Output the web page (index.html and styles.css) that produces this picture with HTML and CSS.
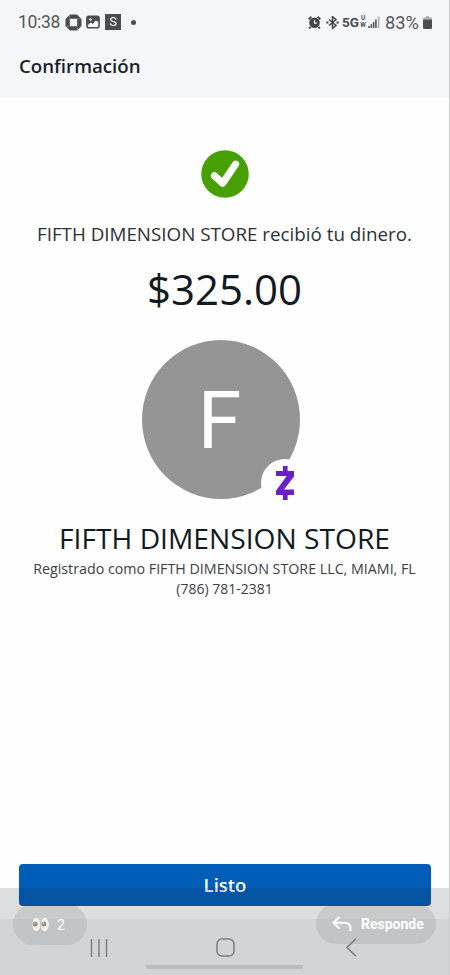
FILE: index.html
```html
<!DOCTYPE html>
<html lang="es">
<head>
<meta charset="utf-8">
<meta name="viewport" content="width=device-width, initial-scale=1">
<title>Confirmación</title>
<link rel="stylesheet" href="styles.css">
</head>
<body>
<div class="screen">
  <header class="top">
    <div class="status">
      <div class="status-left">
        <span class="clock">10:38</span>
        <svg class="ic-chase" width="17" height="17" viewBox="0 0 17 17"><path fill="#4b4c4e" fill-rule="evenodd" d="M5 .5h7L16.500 5v7L12 16.500H5L.5 12V5zM4.800 4.800v7.400h7.400V4.800z"/><path d="M4.700.5v4M16.500 4.700h-4M12.300 16.500v-4M.5 12.300h4" stroke="#a5a6a8" stroke-width=".5"/></svg>
        <svg class="ic-photo" width="14" height="14" viewBox="0 0 14 14"><rect x=".9" y="1.400" width="12.200" height="11.400" rx="2" fill="none" stroke="#4b4c4e" stroke-width="1.600"/><path d="M1 2.500Q1 1 3 1h8q2 0 2 1.500V7L9.500 5.500 7 9 4.500 7.500 2 10H1z" fill="#4b4c4e"/><path d="M2.500 11l2.300-3 2 1.500L9.600 6l2.200 3v2z" fill="#f4f6f9"/><circle cx="4.500" cy="4.500" r="1.200" fill="#f4f6f9"/></svg>
        <span class="app-s">S</span>
        <span class="dot"></span>
      </div>
      <div class="status-right">
        <svg class="ic-alarm" width="13" height="13" viewBox="0 0 13 13"><circle cx="6.500" cy="6.800" r="5.300" fill="#444547"/><path d="M.6 3.400L3.400.7M12.400 3.400L9.600.7M2.600 11L1.200 12.500M10.400 11l1.400 1.500" stroke="#444547" stroke-width="1.900"/><path d="M6.500 4v3.200h2.600" fill="none" stroke="#f4f6f9" stroke-width="1.200"/></svg>
        <svg class="ic-bt" width="13" height="13" viewBox="0 0 13 13"><path d="M3 3.500l7 6L6.500 12.300V.7L10 3.500l-7 6" fill="none" stroke="#444547" stroke-width="1.500"/><path d="M.3 6.500h2.200M10.500 6.500h2.200" stroke="#444547" stroke-width="1.900"/></svg>
        <span class="net">5G</span>
        <span class="uw"><span>U</span><span>W</span></span>
        <svg class="ic-signal" width="12" height="12" viewBox="0 0 12 12"><path d="M1 12V10M3.300 12V8.300M5.600 12V6M7.900 12V3.500" stroke="#58595b" stroke-width="1.600"/><path d="M10.600 12V.5" stroke="#aaabad" stroke-width="1.600"/></svg>
        <span class="pct">83%</span>
        <svg class="ic-batt" width="9" height="13" viewBox="0 0 9 13"><path d="M0 3.500V2.500Q0 1.500 1 1.500h2V.3h3v1.200h2q1 0 1 1v1z" fill="#aaabad"/><path d="M0 3.500h9V12q0 1-1 1H1q-1 0-1-1z" fill="#4e4f51"/></svg>
      </div>
    </div>
    <h1 class="title">Confirmación</h1>
  </header>

  <main class="content">
    <svg class="check" width="48" height="48" viewBox="0 0 48 48"><circle cx="24" cy="24" r="23.800" fill="#46a000"/><path d="M13.500 25.900l8.200 7.300L34.600 14.300" fill="none" stroke="#fff" stroke-width="7.200" stroke-linecap="round" stroke-linejoin="round"/></svg>
    <p class="message">FIFTH DIMENSION STORE recibió tu dinero.</p>
    <p class="amount">$325.00</p>
    <div class="avatar">
      <span class="initial">F</span>
      <span class="badge">
        <svg width="20" height="34" viewBox="0 0 20 34"><path d="M1 5h6.900V0h4.700V5H19v5.500L9 23.500h10V29h-6.400v5H7.900v-5H1v-4.300L11.700 10H1z" fill="#6a1fc9"/></svg>
      </span>
    </div>
    <h2 class="store">FIFTH DIMENSION STORE</h2>
    <p class="registered">Registrado como FIFTH DIMENSION STORE LLC, MIAMI, FL</p>
    <p class="phone">(786) 781-2381</p>
  </main>

  <button class="done">Listo</button>

  <div class="shade"></div>
  <div class="pill pill-views">
    <svg width="17" height="15" viewBox="0 0 17 15"><ellipse cx="4.200" cy="7.500" rx="4" ry="6.800" fill="#f5f0ec"/><ellipse cx="12.800" cy="7.500" rx="4" ry="6.800" fill="#f5f0ec"/><circle cx="3.200" cy="7" r="2.500" fill="#9a8f88"/><circle cx="11.800" cy="7" r="2.500" fill="#9a8f88"/><circle cx="2.700" cy="6" r=".8" fill="#ddd"/><circle cx="11.300" cy="6" r=".8" fill="#ddd"/></svg>
    <span class="count">2</span>
  </div>
  <div class="pill pill-reply">
    <svg width="20" height="16" viewBox="0 0 20 16"><path d="M7.500 1L1.500 6.800l6 5.800M1.500 6.800h11q6 0 6 6V15" fill="none" stroke="#fff" stroke-width="2"/></svg>
    <span class="reply">Responde</span>
  </div>
  <nav class="nav">
    <svg class="nav-recent" width="18" height="18" viewBox="0 0 18 18"><path d="M1.500 0v18M9 0v18M16.500 0v18" stroke="#7e7f83" stroke-width="1.500"/></svg>
    <svg class="nav-home" width="19" height="19" viewBox="0 0 19 19"><rect x="1" y="1" width="17" height="17" rx="5" fill="none" stroke="#7e7f83" stroke-width="1.500"/></svg>
    <svg class="nav-back" width="11" height="19" viewBox="0 0 11 19"><path d="M10 .7L1 9.500l9 8.800" fill="none" stroke="#7e7f83" stroke-width="1.600"/></svg>
  </nav>
  <div class="handle"></div>
</div>
</body>
</html>
```

FILE: styles.css
```css
* { box-sizing: border-box; }
body { margin: 0; background: #fefefe; font-family: "Open Sans", "Noto Sans", sans-serif; color: #1d242b; }
h1, h2, p { margin: 0; font-weight: 400; white-space: nowrap; }
svg { display: block; flex: none; }

.screen { position: relative; width: 450px; height: 975px; overflow: hidden; display: flex; flex-direction: column; border-right: 1px solid #cbccce; }
.top { height: 98px; flex: none; background: #f4f6f9; }
.status { height: 44px; padding: 0 17px 0 18px; display: flex; justify-content: space-between; align-items: center; font-family: Roboto, sans-serif; color: #56575a; }
.status-left, .status-right { display: flex; align-items: center; }
.clock { width: 47px; font-size: 17.5px; letter-spacing: -.3px; }
.ic-photo { margin-left: 4px; }
.app-s { margin-left: 5px; width: 16px; height: 16px; background: #4b4c4e; color: #f4f6f9; font-size: 13px; line-height: 16px; text-align: center; }
.dot { margin-left: 10px; width: 5px; height: 5px; border-radius: 50%; background: #4b4c4e; }
.ic-bt { margin-left: 5px; }
.net { margin-left: 3px; width: 17px; font-size: 13.5px; letter-spacing: -.1px; font-weight: 700; color: #4b4c4e; }
.uw { margin-left: 1px; width: 6px; display: flex; flex-direction: column; align-items: center; font-size: 6.3px; line-height: 7px; font-weight: 700; color: #4b4c4e; }
.ic-signal { margin-left: 2px; }
.pct { margin-left: 5px; width: 37px; font-size: 18.3px; }
.ic-batt { margin-left: 1px; }
.title { padding-left: 19px; font-size: 18.7px; line-height: 43px; font-weight: 600; color: #1a1f29; }

.content { flex: 1; display: flex; flex-direction: column; align-items: center; padding-top: 52px; }
.message { margin-top: 22px; font-size: 18.8px; line-height: 28px; color: #2c3136; }
.amount { margin-top: 13px; font-size: 42px; line-height: 56px; color: #111a22; }
.avatar { position: relative; width: 158px; height: 159px; margin: 23px 7px 0 0; border-radius: 50%; background: #959595; display: flex; align-items: center; justify-content: center; }
.initial { padding: 2px 3px 0 0; font: 400 79px/94px Roboto, sans-serif; color: #fff; }
.badge { position: absolute; left: 119px; top: 119px; width: 48px; height: 48px; border-radius: 50%; background: #fefefe; display: flex; align-items: center; justify-content: center; }
.store { margin-top: 19px; font-size: 28.2px; line-height: 40px; color: #111a22; }
.registered, .phone { font-size: 14.25px; line-height: 20px; color: #3c4146; }
.registered { margin-top: 1px; }
.phone { font-size: 14px; }

.done { flex: none; height: 42px; margin: 0 18px 69px 19px; padding: 0; border: 0; border-radius: 4px; background: #005eb8; color: #fff; font: 600 18.5px/42px "Open Sans", sans-serif; }
.shade { position: absolute; left: 0; right: -1px; top: 888px; bottom: 0; background: linear-gradient(rgba(20, 25, 35, .14) 31px, rgba(20, 25, 40, .185) 31px); }
.pill { position: absolute; display: flex; align-items: center; background: linear-gradient(#c7cbcc 15px, #c1c5c8 15px); color: #fff; clip-path: inset(2px 0 0 0); }
.pill-views { left: 13px; top: 904px; width: 74px; height: 41px; border-radius: 21px; padding-left: 19px; gap: 8px; }
.pill-reply { left: 316px; top: 904px; width: 120px; height: 40px; border-radius: 20px; padding-left: 16px; gap: 9px; }
.count { font: 400 14px/16px Roboto, sans-serif; }
.reply { font: 700 14px/16px Roboto, sans-serif; }
.nav { position: absolute; left: 90px; top: 938px; width: 267px; height: 19px; display: flex; justify-content: space-between; align-items: center; }
.nav-home { margin-left: -4px; }
.handle { position: absolute; left: 146px; top: 965px; width: 157px; height: 4px; border-radius: 2px; background: #bbbcc0; }
```
